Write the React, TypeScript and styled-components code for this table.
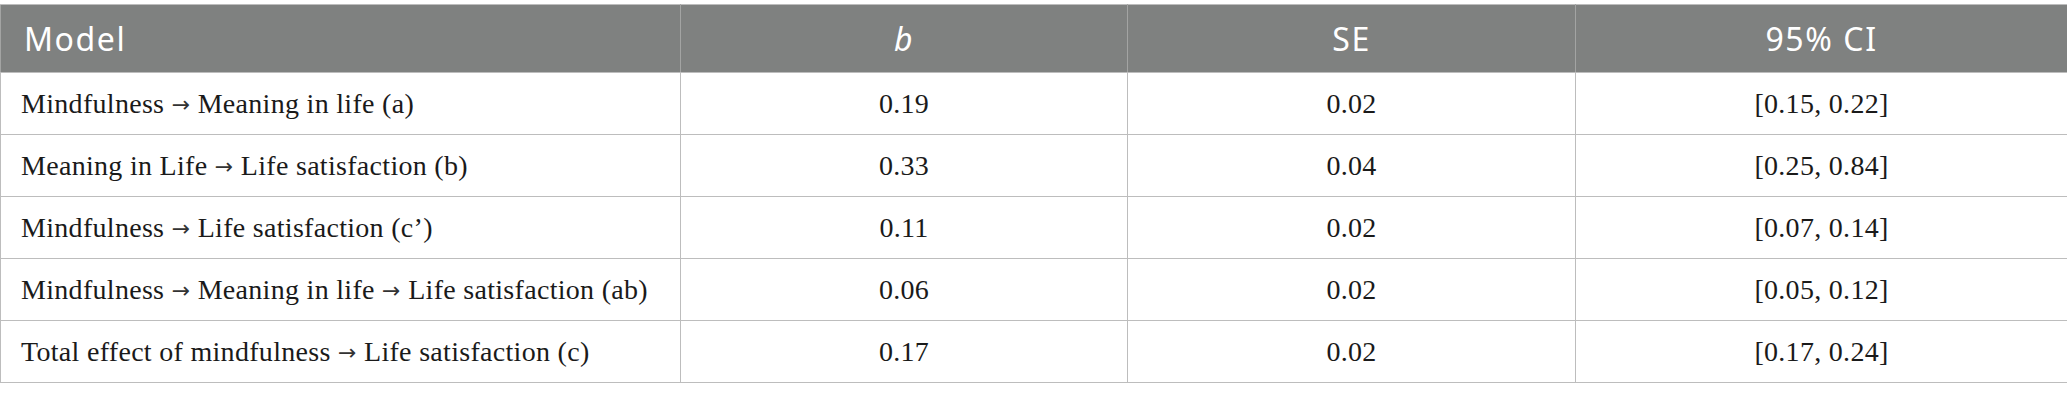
import React from "react";
import styled, { createGlobalStyle } from "styled-components";

const Global = createGlobalStyle`
  html, body { margin: 0; padding: 0; background: #ffffff; }
  #root { padding-top: 4px; }
`;

const Table = styled.table`
  width: 2067px;
  border-collapse: collapse;
  table-layout: fixed;
  border: 1px solid #bdbdbd;
`;

const HeadCell = styled.th<{ $align?: "left" | "center"; $italic?: boolean }>`
  background: #7f8180;
  color: #ffffff;
  font-family: "Noto Sans", "Open Sans", sans-serif;
  font-weight: 400;
  font-size: 32px;
  letter-spacing: 1.6px;
  font-style: ${(p) => (p.$italic ? "italic" : "normal")};
  text-align: ${(p) => p.$align ?? "center"};
  height: 68px;
  padding: 0 23px;
  border: 1px solid #bdbdbd;
  border-left-color: #a3a4a3;
  border-right-color: #a3a4a3;
  box-sizing: border-box;
  vertical-align: middle;
`;

const Cell = styled.td<{ $align?: "left" | "center" }>`
  font-family: "Liberation Serif", "Times New Roman", serif;
  font-size: 28px;
  letter-spacing: 0.3px;
  color: #1a1a1a;
  text-align: ${(p) => p.$align ?? "center"};
  height: 61px;
  padding: 0 20px;
  border: 1px solid #bdbdbd;
  vertical-align: middle;
  white-space: nowrap;
`;

const Arrow = styled.span`
  font-family: "DejaVu Sans", sans-serif;
  font-size: 22px;
  color: #333333;
  position: relative;
  top: -1px;
`;

const rows: [string[], string, string, string][] = [
  [["Mindfulness", "Meaning in life (a)"], "0.19", "0.02", "[0.15, 0.22]"],
  [["Meaning in Life", "Life satisfaction (b)"], "0.33", "0.04", "[0.25, 0.84]"],
  [["Mindfulness", "Life satisfaction (c’)"], "0.11", "0.02", "[0.07, 0.14]"],
  [["Mindfulness", "Meaning in life", "Life satisfaction (ab)"], "0.06", "0.02", "[0.05, 0.12]"],
  [["Total effect of mindfulness", "Life satisfaction (c)"], "0.17", "0.02", "[0.17, 0.24]"],
];

export default function App() {
  return (
    <>
      <Global />
      <Table>
        <colgroup>
          <col style={{ width: 680 }} />
          <col style={{ width: 447 }} />
          <col style={{ width: 448 }} />
          <col style={{ width: 492 }} />
        </colgroup>
        <thead>
          <tr>
            <HeadCell $align="left">Model</HeadCell>
            <HeadCell $italic>b</HeadCell>
            <HeadCell>SE</HeadCell>
            <HeadCell>95% CI</HeadCell>
          </tr>
        </thead>
        <tbody>
          {rows.map((r, i) => (
            <tr key={i}>
              <Cell $align="left">
                {r[0].map((part, j) => (
                  <React.Fragment key={j}>
                    {j > 0 && (
                      <>
                        {" "}
                        <Arrow>→</Arrow>{" "}
                      </>
                    )}
                    {part}
                  </React.Fragment>
                ))}
              </Cell>
              <Cell>{r[1]}</Cell>
              <Cell>{r[2]}</Cell>
              <Cell>{r[3]}</Cell>
            </tr>
          ))}
        </tbody>
      </Table>
    </>
  );
}
